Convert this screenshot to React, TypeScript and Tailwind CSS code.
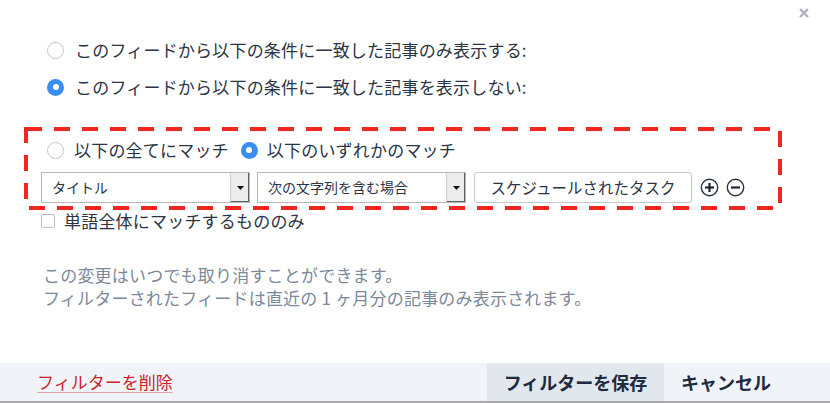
const FONT = "font-['Noto_Sans_CJK_JP','Noto_Sans',sans-serif]"

function Radio({ checked }: { checked?: boolean }) {
  if (checked) {
    return (
      <span className="w-[17px] h-[17px] shrink-0 rounded-full bg-[#3a8ef2] flex items-center justify-center">
        <span className="w-[6px] h-[6px] rounded-full bg-white" />
      </span>
    )
  }
  return <span className="w-[17px] h-[17px] shrink-0 rounded-full border border-[#c4c4c4] bg-white" />
}

function Select({ label, width }: { label: string; width: string }) {
  return (
    <div className={`${width} h-[31px] border border-[#b8b8b8] bg-white flex items-stretch`}>
      <span className="flex-1 pl-[10px] flex items-center text-[14px] text-[#2b3445]">{label}</span>
      <span className="w-[19px] bg-[#ececec] border-l border-[#d0d0d0] shadow-[inset_-1px_-1px_0_#5f5f5f] flex items-center justify-center">
        <svg width="7" height="4" viewBox="0 0 7 4">
          <path d="M0 0H7L3.5 4Z" fill="#111" />
        </svg>
      </span>
    </div>
  )
}

function CircleIcon({ plus }: { plus?: boolean }) {
  return (
    <svg width="19" height="19" viewBox="0 0 19 19">
      <circle cx="9.5" cy="9.5" r="8.2" fill="none" stroke="#2b3445" strokeWidth="1.4" />
      <path d="M5 9.5H14" stroke="#1d2636" strokeWidth="2.2" />
      {plus && <path d="M9.5 5V14" stroke="#1d2636" strokeWidth="2.2" />}
    </svg>
  )
}

export default function App() {
  return (
    <div className={`relative w-[830px] h-[403px] bg-white flex flex-col overflow-hidden ${FONT}`}>
      <button className="absolute top-[8px] right-[21px] w-[10px] h-[10px]">
        <svg width="10" height="10" viewBox="0 0 10 10">
          <path d="M1 1L9 9M9 1L1 9" stroke="#aeb3bb" strokeWidth="2.4" />
        </svg>
      </button>

      <div className="pl-[41px] pt-[40px] text-[17px] tracking-[0.2px] text-[#2b3445]">
        <label className="h-[20px] pl-[6px] flex items-center gap-[11px]">
          <Radio />
          <span>このフィードから以下の条件に一致した記事のみ表示する:</span>
        </label>
        <label className="mt-[17px] h-[20px] pl-[6px] flex items-center gap-[11px]">
          <Radio checked />
          <span>このフィードから以下の条件に一致した記事を表示しない:</span>
        </label>

        <div className="mt-[43px] h-[20px] pl-[6px] flex items-center">
          <label className="flex items-center gap-[10px]">
            <Radio />
            <span>以下の全てにマッチ</span>
          </label>
          <label className="ml-[12px] flex items-center gap-[9px]">
            <Radio checked />
            <span>以下のいずれかのマッチ</span>
          </label>
        </div>

        <div className="mt-[12px] flex items-center gap-[7px] tracking-normal">
          <Select label="タイトル" width="w-[209px]" />
          <Select label="次の文字列を含む場合" width="w-[209px]" />
          <div className="ml-[1px] w-[218px] h-[31px] border border-[#c3c7ce] rounded-[3px] bg-white flex items-center justify-center text-[15.5px]">
            スケジュールされたタスク
          </div>
          <div className="ml-[1px] flex items-center gap-[7px]">
            <CircleIcon plus />
            <CircleIcon />
          </div>
        </div>

        <label className="mt-[8px] h-[20px] flex items-center gap-[9px]">
          <span className="w-[14px] h-[14px] border border-[#bdbdbd] rounded-[2px] bg-white" />
          <span>単語全体にマッチするもののみ</span>
        </label>

        <div className="mt-[32px] pl-[2px] text-[#7d8898] leading-[23px]">
          <p>この変更はいつでも取り消すことができます。</p>
          <p>フィルターされたフィードは直近の 1 ヶ月分の記事のみ表示されます。</p>
        </div>
      </div>

      <div className="mt-auto h-[40px] bg-[#f0f3f7] border-b-2 border-[#a9a9a9] flex items-stretch">
        <a className="ml-[37px] self-center text-[17px] text-[#cc2229] underline decoration-[#e5a3a6] underline-offset-[3px]">
          フィルターを削除
        </a>
        <div className="ml-auto mr-[42px] flex items-stretch text-[18px] font-bold text-[#1e2a3d]">
          <button className="w-[177px] bg-[#e2e7ee] flex items-center justify-center">フィルターを保存</button>
          <button className="w-[124px] flex items-center justify-center">キャンセル</button>
        </div>
      </div>

      <svg className="absolute left-[24px] top-[127px]" width="758" height="83" viewBox="0 0 758 83">
        <rect x="2" y="2" width="754" height="79" fill="none" stroke="#f0261f" strokeWidth="4" strokeDasharray="16 12" />
      </svg>
    </div>
  )
}
